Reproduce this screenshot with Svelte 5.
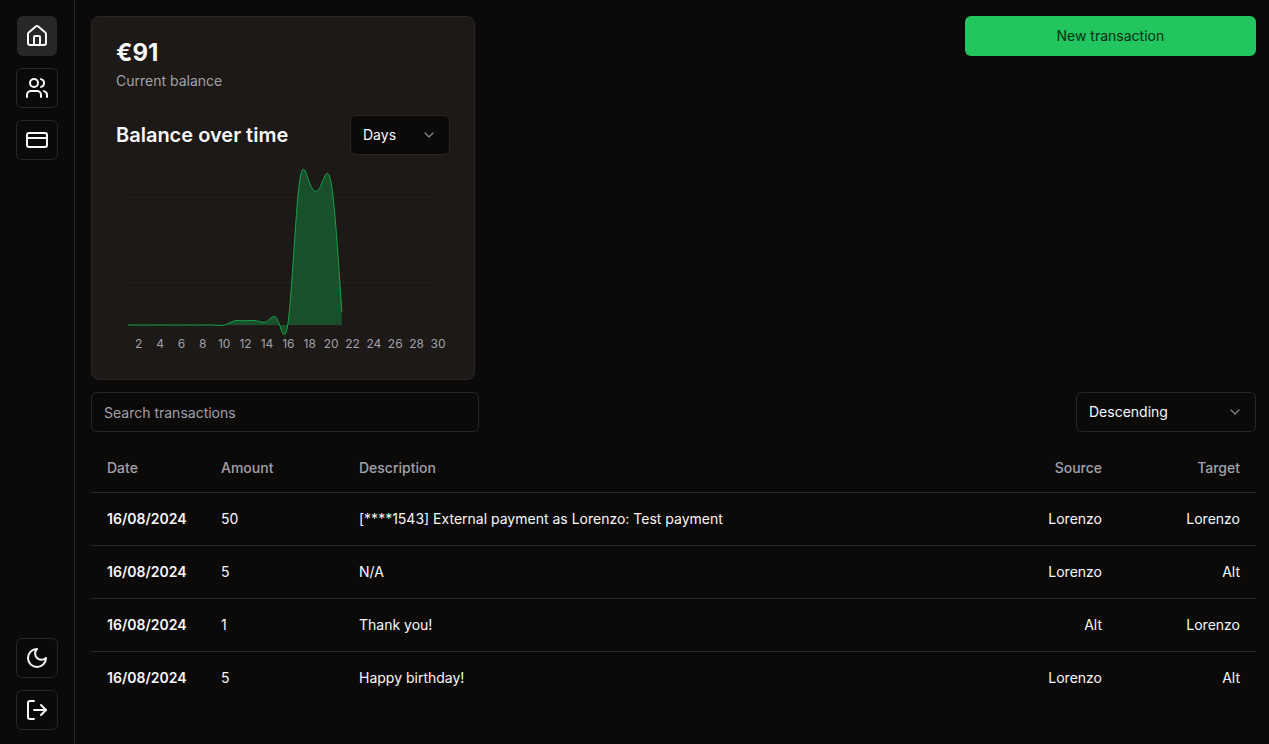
<script>
  const nav = [
    {
      label: 'Home',
      active: true,
      paths: [
        'M15 21v-8a1 1 0 0 0-1-1h-4a1 1 0 0 0-1 1v8',
        'M3 10a2 2 0 0 1 .709-1.528l7-5.999a2 2 0 0 1 2.582 0l7 5.999A2 2 0 0 1 21 10v9a2 2 0 0 1-2 2H5a2 2 0 0 1-2-2z'
      ]
    },
    {
      label: 'People',
      paths: [
        'M16 21v-2a4 4 0 0 0-4-4H6a4 4 0 0 0-4 4v2',
        'M5 7a4 4 0 1 0 8 0a4 4 0 1 0-8 0',
        'M22 21v-2a4 4 0 0 0-3-3.87',
        'M16 3.13a4 4 0 0 1 0 7.75'
      ]
    },
    {
      label: 'Cards',
      paths: [
        'M4 5h16a2 2 0 0 1 2 2v10a2 2 0 0 1-2 2H4a2 2 0 0 1-2-2V7a2 2 0 0 1 2-2z',
        'M2 10h20'
      ]
    }
  ];

  const tools = [
    { label: 'Toggle theme', paths: ['M12 3a6 6 0 0 0 9 9 9 9 0 1 1-9-9Z'] },
    { label: 'Log out', paths: ['M9 21H5a2 2 0 0 1-2-2V5a2 2 0 0 1 2-2h4', 'M16 17l5-5-5-5', 'M21 12H9'] }
  ];

  const balances = [0, 0, 0, 0, 0, 0, 0, 0, 0, 0, 30, 30, 30, 26, 36, 30, 984, 1000, 978, 1004, 91];
  const max = 1200;
  const left = 12;
  const plotWidth = 310;
  const plotHeight = 170;
  const x = (day) => left + ((day - 1) * plotWidth) / 29;
  const y = (value) => plotHeight - (value * plotHeight) / max;

  // First and second Bézier controls of a natural cubic spline along one axis.
  function controls(p) {
    const n = p.length - 1;
    const a = new Array(n);
    const b = new Array(n);
    const r = new Array(n);
    a[0] = 0;
    b[0] = 2;
    r[0] = p[0] + 2 * p[1];
    for (let i = 1; i < n - 1; i++) {
      a[i] = 1;
      b[i] = 4;
      r[i] = 4 * p[i] + 2 * p[i + 1];
    }
    a[n - 1] = 2;
    b[n - 1] = 7;
    r[n - 1] = 8 * p[n - 1] + p[n];
    for (let i = 1; i < n; i++) {
      const m = a[i] / b[i - 1];
      b[i] -= m;
      r[i] -= m * r[i - 1];
    }
    a[n - 1] = r[n - 1] / b[n - 1];
    for (let i = n - 2; i >= 0; i--) a[i] = (r[i] - a[i + 1]) / b[i];
    b[n - 1] = (p[n] + a[n - 1]) / 2;
    for (let i = 0; i < n - 1; i++) b[i] = 2 * p[i + 1] - a[i + 1];
    return [a, b];
  }

  const xs = balances.map((_, i) => x(i + 1));
  const ys = balances.map(y);
  const [x1, x2] = controls(xs);
  const [y1, y2] = controls(ys);
  let line = `M${xs[0]},${ys[0]}`;
  for (let i = 0; i < xs.length - 1; i++) {
    line += `C${x1[i]},${y1[i]},${x2[i]},${y2[i]},${xs[i + 1]},${ys[i + 1]}`;
  }
  const area = `${line}L${xs[xs.length - 1]},${plotHeight}L${xs[0]},${plotHeight}Z`;

  const gridLines = [0, 300, 600, 900, 1200];
  const days = Array.from({ length: 15 }, (_, i) => (i + 1) * 2);

  const rows = [
    ['16/08/2024', '50', '[****1543] External payment as Lorenzo: Test payment', 'Lorenzo', 'Lorenzo'],
    ['16/08/2024', '5', 'N/A', 'Lorenzo', 'Alt'],
    ['16/08/2024', '1', 'Thank you!', 'Alt', 'Lorenzo'],
    ['16/08/2024', '5', 'Happy birthday!', 'Lorenzo', 'Alt']
  ];
</script>

{#snippet icon(paths)}
  <svg class="icon" viewBox="0 0 24 24" aria-hidden="true">
    {#each paths as d}<path {d} />{/each}
  </svg>
{/snippet}

{#snippet chevron()}
  <svg class="chevron" viewBox="0 0 24 24" aria-hidden="true"><path d="m6 9 6 6 6-6" /></svg>
{/snippet}

<div class="shell">
  <aside>
    <nav>
      {#each nav as item}
        <a href="#/" class="tile" class:active={item.active} aria-label={item.label}>{@render icon(item.paths)}</a>
      {/each}
    </nav>
    <div class="tools">
      {#each tools as item}
        <button class="tile" aria-label={item.label}>{@render icon(item.paths)}</button>
      {/each}
    </div>
  </aside>

  <main>
    <div class="top">
      <section class="card">
        <h1>€91</h1>
        <p>Current balance</p>
        <div class="chart-head">
          <h2>Balance over time</h2>
          <div class="select days">
            <select aria-label="Period"><option>Days</option></select>
            {@render chevron()}
          </div>
        </div>
        <svg class="chart" viewBox="0 0 334 200" role="img" aria-label="Balance over time">
          {#each gridLines as g}
            <line x1={left} x2={left + plotWidth} y1={y(g)} y2={y(g)} />
          {/each}
          <path class="area" d={area} />
          <path class="line" d={line} />
          {#each days as d}
            <text x={x(d)} y="193">{d}</text>
          {/each}
        </svg>
      </section>
      <button class="primary">New transaction</button>
    </div>

    <div class="filters">
      <input type="text" placeholder="Search transactions" aria-label="Search transactions" />
      <div class="select order">
        <select aria-label="Order"><option>Descending</option></select>
        {@render chevron()}
      </div>
    </div>

    <table>
      <thead>
        <tr>
          <th class="date">Date</th>
          <th class="side">Amount</th>
          <th>Description</th>
          <th class="side end">Source</th>
          <th class="side end">Target</th>
        </tr>
      </thead>
      <tbody>
        {#each rows as [date, amount, description, source, target]}
          <tr>
            <td class="strong">{date}</td>
            <td>{amount}</td>
            <td>{description}</td>
            <td class="end">{source}</td>
            <td class="end">{target}</td>
          </tr>
        {/each}
      </tbody>
    </table>
  </main>
</div>

<style>
  :global(body) {
    background: #0c0a09;
  }
  .shell,
  .shell :global(*) {
    box-sizing: border-box;
  }
  .shell {
    display: flex;
    min-height: 100vh;
    background: #0c0a09;
    color: #f8f8f8;
    font: 14px/20px Inter, 'Liberation Sans', sans-serif;
  }
  button,
  select,
  input {
    font: inherit;
    color: inherit;
  }
  aside {
    display: flex;
    flex-direction: column;
    justify-content: space-between;
    padding: 16px 16px 14px;
    border-right: 1px solid #27272a;
  }
  nav,
  .tools {
    display: flex;
    flex-direction: column;
    align-items: center;
    gap: 12px;
  }
  .tile {
    display: flex;
    align-items: center;
    justify-content: center;
    width: 42px;
    height: 40px;
    padding: 0;
    border: 1px solid #27272a;
    border-radius: 6px;
    background: #0c0a09;
    color: #f8f8f8;
  }
  .tile.active {
    width: 40px;
    border: 0;
    background: #27272a;
  }
  .icon {
    width: 24px;
    height: 24px;
  }
  .icon,
  .chevron {
    fill: none;
    stroke: currentColor;
    stroke-width: 2;
    stroke-linecap: round;
    stroke-linejoin: round;
  }
  main {
    flex: 1;
    min-width: 0;
    display: flex;
    flex-direction: column;
    gap: 12px;
    padding: 16px 13px 16px 16px;
  }
  .top,
  .filters {
    display: flex;
    justify-content: space-between;
    align-items: flex-start;
  }
  .card {
    width: 100%;
    max-width: 384px;
    padding: 24px;
    border: 1px solid #27272a;
    border-radius: 8px;
    background: #1c1917;
  }
  h1,
  h2,
  p {
    margin: 0;
  }
  h1 {
    font-size: 24px;
    line-height: 24px;
    font-weight: 700;
  }
  p {
    margin-top: 6px;
    color: #a1a1aa;
  }
  .chart-head {
    display: flex;
    align-items: center;
    justify-content: space-between;
    margin-top: 24px;
  }
  h2 {
    font-size: 20px;
    line-height: 28px;
    font-weight: 600;
  }
  .chart {
    display: block;
    width: 100%;
    overflow: visible;
  }
  .chart line {
    stroke: #27272a;
    stroke-opacity: 0.5;
  }
  .chart .area {
    fill: #16a34a;
    fill-opacity: 0.4;
  }
  .chart .line {
    fill: none;
    stroke: #16a34a;
  }
  .chart text {
    fill: #a1a1aa;
    font-size: 12px;
    text-anchor: middle;
  }
  .primary {
    width: 25%;
    height: 40px;
    border: 0;
    border-radius: 6px;
    background: #22c55e;
    color: #052e16;
  }
  .select {
    display: grid;
    align-items: center;
  }
  .select > :global(*) {
    grid-area: 1 / 1;
  }
  .days {
    width: 100px;
  }
  .order {
    width: 180px;
  }
  select,
  input {
    width: 100%;
    height: 40px;
    padding: 0 12px;
    border: 1px solid #27272a;
    border-radius: 6px;
    background: #0c0a09;
    appearance: none;
  }
  .chevron {
    justify-self: end;
    width: 16px;
    height: 16px;
    margin-right: 13px;
    opacity: 0.5;
    pointer-events: none;
  }
  input {
    width: 33.3%;
  }
  input::placeholder {
    color: #a1a1aa;
    opacity: 1;
  }
  table {
    width: 100%;
    border-collapse: collapse;
    table-layout: fixed;
  }
  th {
    height: 48px;
    padding: 0 16px;
    text-align: left;
    font-weight: 500;
    color: #a1a1aa;
  }
  td {
    height: 53px;
    padding: 0 16px;
  }
  tr {
    border-bottom: 1px solid #27272a;
  }
  tbody tr:last-child {
    border-bottom: 0;
  }
  .date {
    width: 114px;
  }
  .side {
    width: 138px;
  }
  .end {
    text-align: right;
  }
  .strong {
    font-weight: 600;
  }
</style>
